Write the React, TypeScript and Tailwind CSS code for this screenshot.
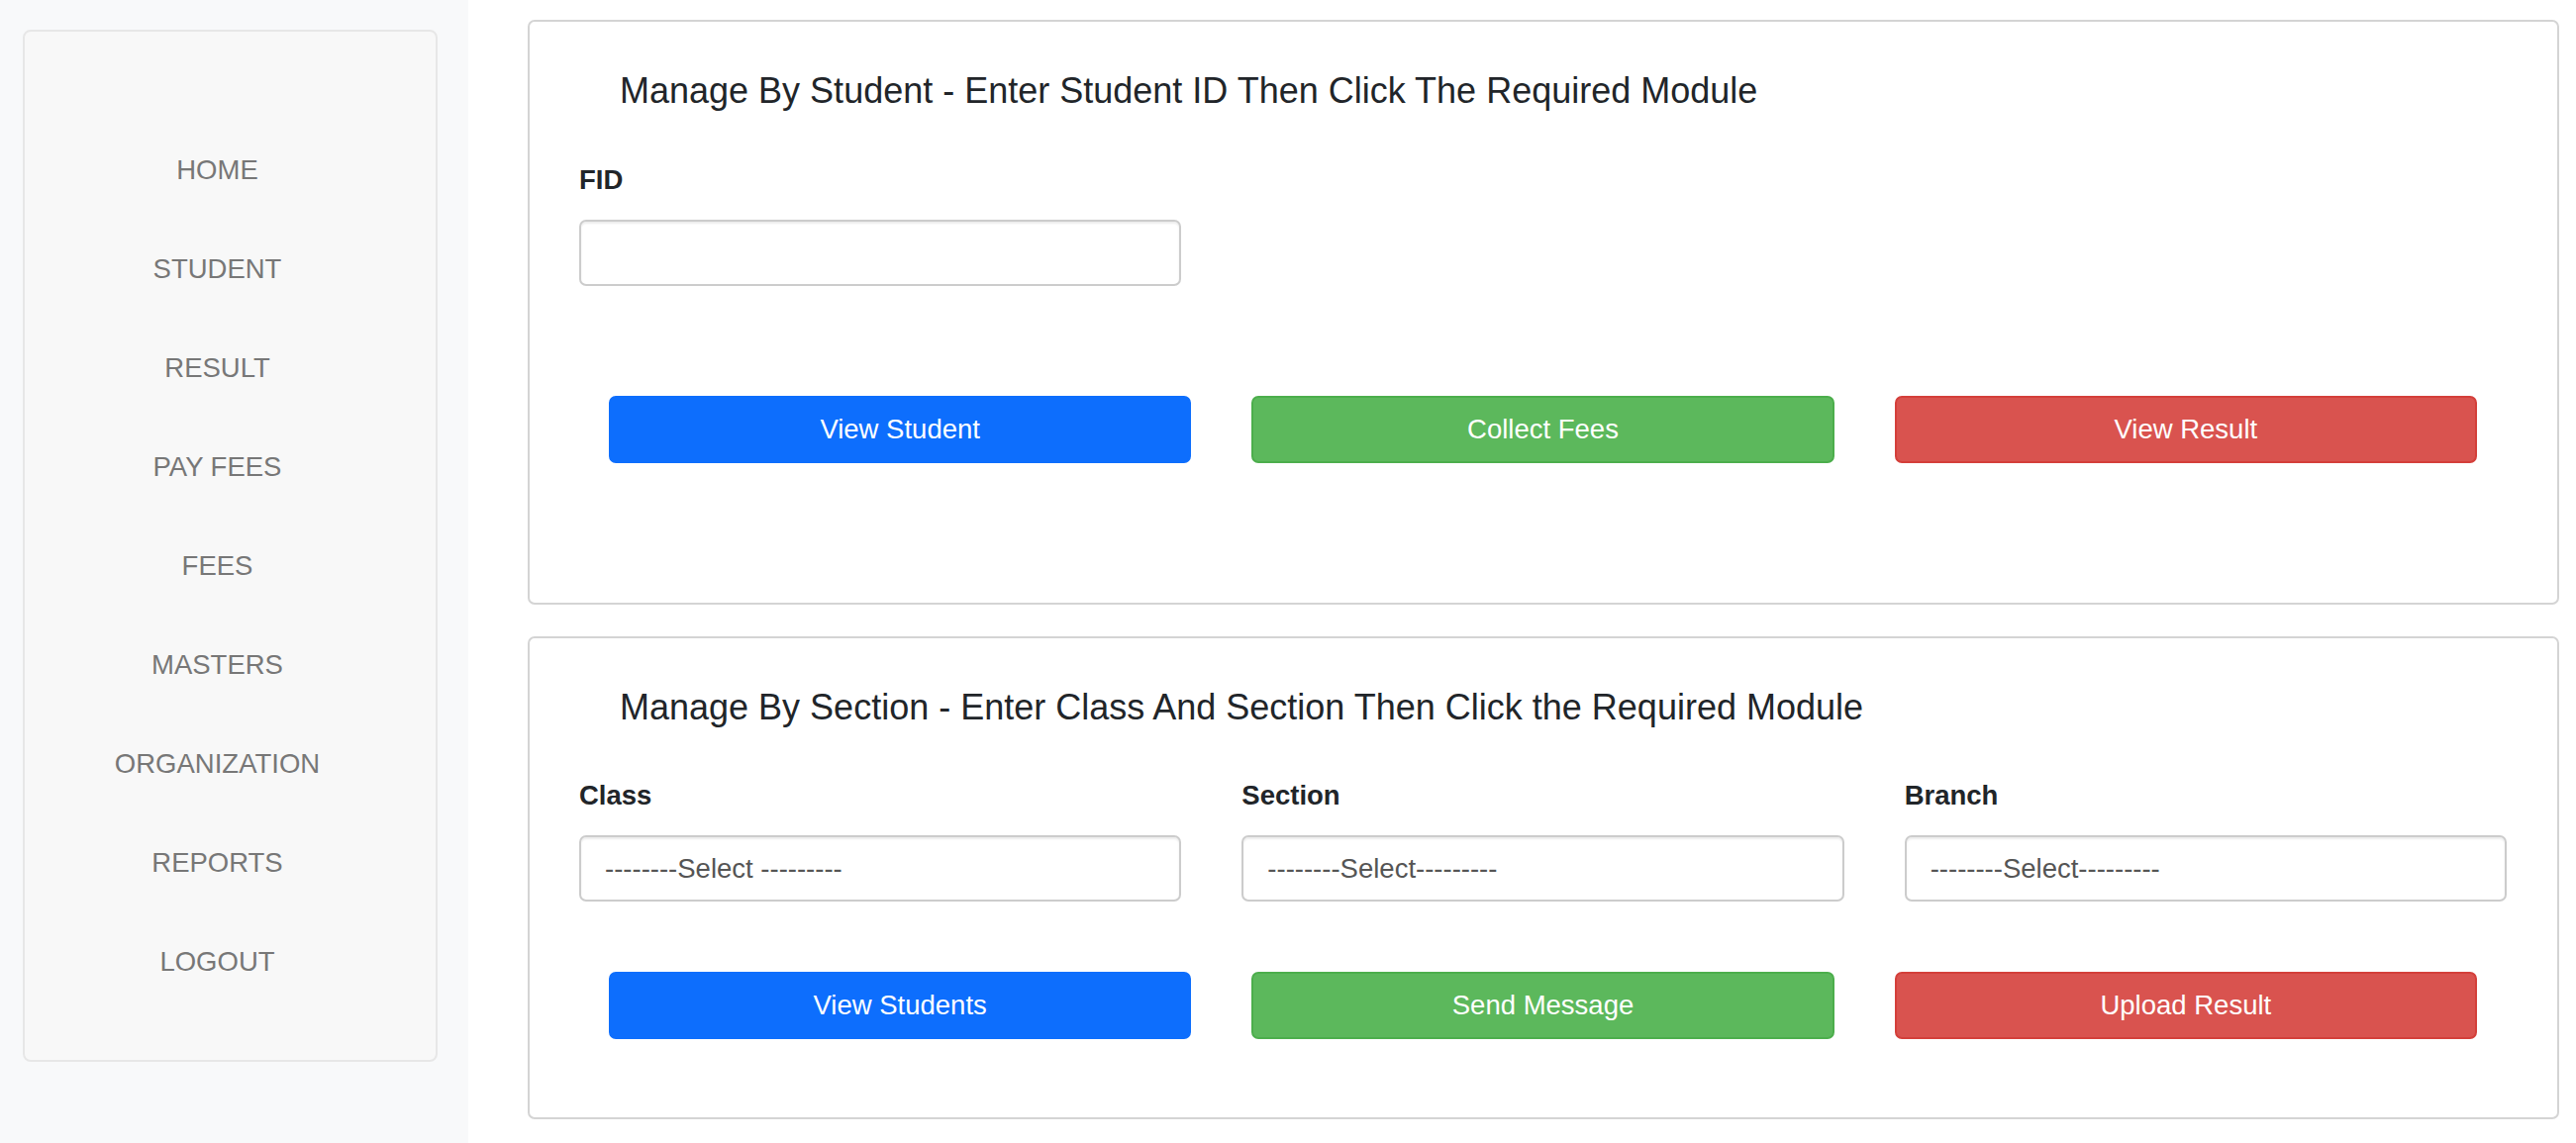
import React from "react";

const navItems = ["HOME", "STUDENT", "RESULT", "PAY FEES", "FEES", "MASTERS", "ORGANIZATION", "REPORTS", "LOGOUT"];

function Field({ label, children }: { label: string; children: React.ReactNode }) {
  return (
    <div className="flex flex-col">
      <label className="text-[27.5px] leading-[32px] font-bold text-[#212529]">{label}</label>
      <div className="mt-[24px]">{children}</div>
    </div>
  );
}

function SelectBox({ text }: { text: string }) {
  return (
    <select
      className="w-full h-[67px] appearance-none rounded-[7px] border-2 border-[#cccccc] bg-white pl-[24px] text-[27.5px] text-[#555555] shadow-[inset_0_2px_2px_rgba(0,0,0,0.075)] outline-none"
      style={{ fontFamily: '"Liberation Sans", Arial, sans-serif' }}
      defaultValue=""
    >
      <option value="">{text}</option>
    </select>
  );
}

function Btn({ text, color }: { text: string; color: "blue" | "green" | "red" }) {
  const cls =
    color === "blue"
      ? "bg-[#0d6efd] border-[#0d6efd]"
      : color === "green"
      ? "bg-[#5cb85c] border-[#4cae4c]"
      : "bg-[#d9534f] border-[#d43f3a]";
  return (
    <button
      className={`h-[68px] w-full rounded-[7px] border-2 text-[27.5px] text-white ${cls}`}
      style={{ fontFamily: '"Liberation Sans", Arial, sans-serif' }}
    >
      {text}
    </button>
  );
}

export default function App() {
  return (
    <div
      className="flex min-h-[1155px] w-full bg-white"
      style={{ fontFamily: '"Liberation Sans", Arial, sans-serif' }}
    >
      <aside className="w-[473px] shrink-0 bg-[#f8f9fa] pl-[23px] pr-[31px] pt-[30px]">
        <div className="rounded-[8px] border-2 border-[#e7e7e7] bg-[#f8f8f8] pt-[90px] pb-[49px] pr-[26px]">
          {navItems.map((n) => (
            <div key={n} className="h-[100px] text-center text-[27.5px] leading-[100px] text-[#777777]">
              {n}
            </div>
          ))}
        </div>
      </aside>

      <main className="flex flex-1 flex-col gap-[32px] pl-[60px] pr-[17px] pt-[20px] pb-[24px]">
        <section className="rounded-[7px] border-2 border-[#d4d4d4] bg-white pl-[50px] pr-[51px] pt-[50px] pb-[141px]">
          <h2 className="ml-[41px] text-[36px] leading-[40px] font-normal text-[#212529]">
            Manage By Student - Enter Student ID Then Click The Required Module
          </h2>
          <div className="mt-[54px] grid grid-cols-3 gap-x-[61px]">
            <Field label="FID">
              <input
                type="text"
                className="h-[67px] w-full rounded-[7px] border-2 border-[#cccccc] bg-white px-[24px] text-[27.5px] shadow-[inset_0_2px_2px_rgba(0,0,0,0.075)] outline-none"
              />
            </Field>
          </div>
          <div className="mt-[111px] grid grid-cols-3 gap-x-[61px] px-[30px]">
            <Btn text="View Student" color="blue" />
            <Btn text="Collect Fees" color="green" />
            <Btn text="View Result" color="red" />
          </div>
        </section>

        <section className="rounded-[7px] border-2 border-[#d4d4d4] bg-white pl-[50px] pr-[51px] pt-[50px] pb-[79px]">
          <h2 className="ml-[41px] text-[36px] leading-[40px] font-normal text-[#212529]">
            Manage By Section - Enter Class And Section Then Click the Required Module
          </h2>
          <div className="mt-[53px] grid grid-cols-3 gap-x-[61px]">
            <Field label="Class">
              <SelectBox text="--------Select ---------" />
            </Field>
            <Field label="Section">
              <SelectBox text="--------Select---------" />
            </Field>
            <Field label="Branch">
              <SelectBox text="--------Select---------" />
            </Field>
          </div>
          <div className="mt-[71px] grid grid-cols-3 gap-x-[61px] px-[30px]">
            <Btn text="View Students" color="blue" />
            <Btn text="Send Message" color="green" />
            <Btn text="Upload Result" color="red" />
          </div>
        </section>
      </main>
    </div>
  );
}
